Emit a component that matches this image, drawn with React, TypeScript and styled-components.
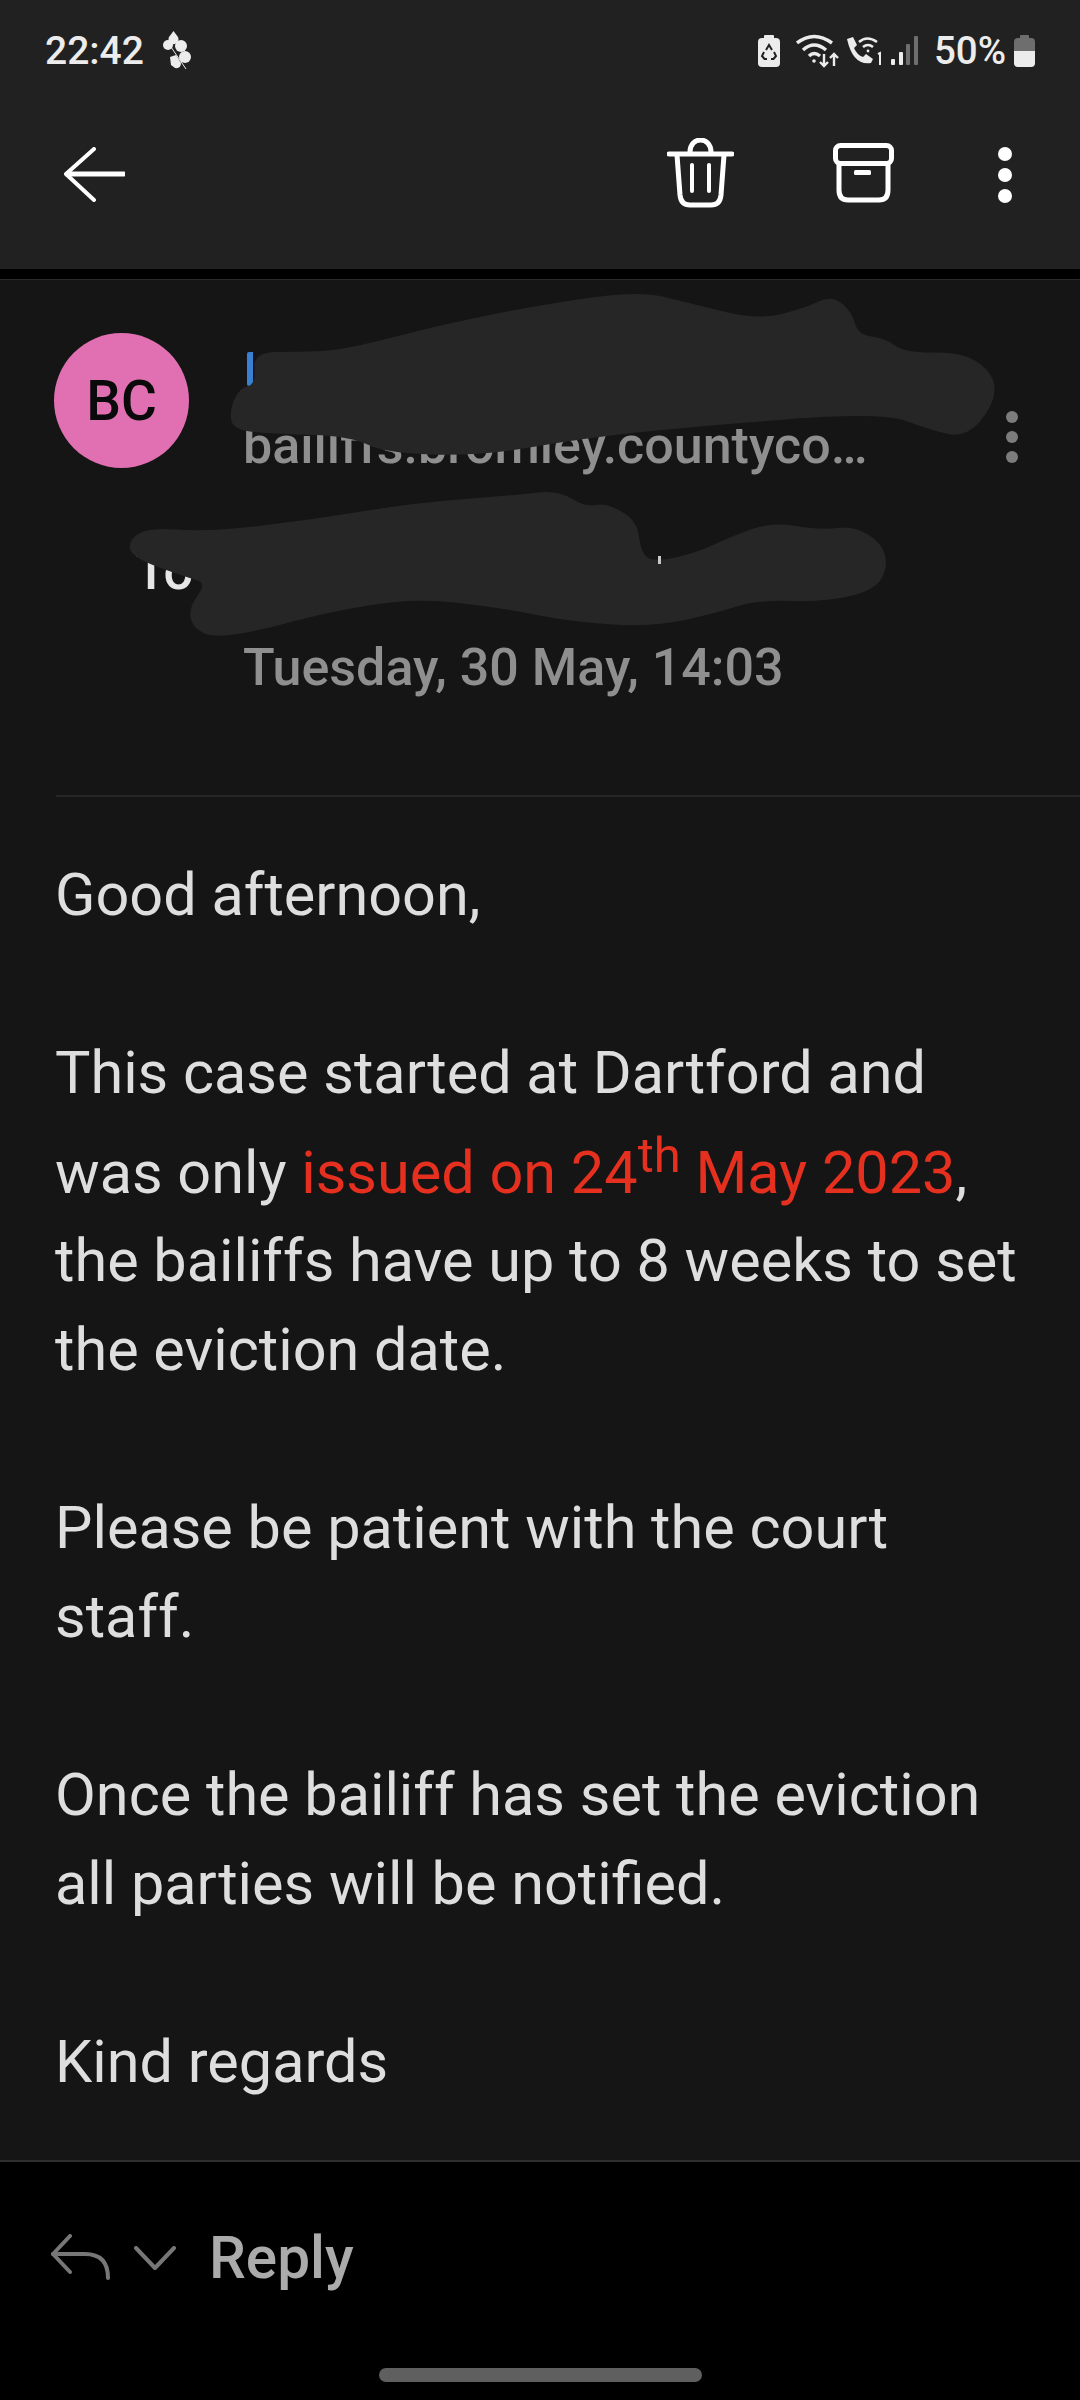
import React from "react";
import styled, { createGlobalStyle } from "styled-components";

const Global = createGlobalStyle`
  html, body { margin: 0; padding: 0; background: #000; }
  * { box-sizing: border-box; }
`;

const Page = styled.div`
  position: relative;
  width: 1080px;
  height: 2400px;
  display: flex;
  flex-direction: column;
  overflow: hidden;
  background: #151515;
  font-family: Roboto, "Noto Sans", sans-serif;
`;

const Header = styled.header`
  height: 269px;
  background: #212121;
  display: flex;
  flex-direction: column;
`;

const StatusBar = styled.div`
  height: 100px;
  padding: 32px 45px 0 45px;
  display: flex;
  align-items: flex-start;
  justify-content: space-between;
  color: #ececec;
`;

const StatusGroup = styled.div`
  display: flex;
  align-items: center;
  height: 38px;
`;

const Clock = styled.span`
  font-size: 39px;
  font-weight: 500;
  line-height: 38px;
  margin-right: 17px;
`;

const Percent = styled.span`
  font-size: 38.5px;
  font-weight: 500;
  line-height: 38px;
  margin: 0 8px 0 16px;
`;

const StatusIcon = styled.svg<{ $left?: number }>`
  display: block;
  flex: none;
  margin-left: ${(p) => p.$left ?? 0}px;
`;

const Toolbar = styled.div`
  flex: 1;
  display: flex;
  align-items: flex-start;
  padding: 38px 0 0 64px;
`;

const ToolIcon = styled.svg<{ $left: number; $top: number }>`
  display: block;
  flex: none;
  margin-left: ${(p) => p.$left}px;
  margin-top: ${(p) => p.$top}px;
`;

const Band = styled.div`
  height: 10px;
  background: #000;
  flex: none;
`;

const Message = styled.main`
  flex: 1;
  border-top: 1px solid #2b2b2b;
  display: flex;
  flex-direction: column;
  min-height: 0;
`;

const MetaBlock = styled.section`
  height: 515px;
  padding: 53px 0 0 54px;
  display: flex;
  flex: none;
`;

const Avatar = styled.div`
  width: 135px;
  height: 135px;
  border-radius: 50%;
  background: #e070b2;
  color: #0a0a0a;
  font-size: 55px;
  font-weight: 500;
  display: flex;
  align-items: center;
  justify-content: center;
  flex: none;
`;

const Details = styled.div`
  margin-left: 54px;
  width: 702px;
  display: flex;
  flex-direction: column;
`;

const NameMark = styled.div`
  width: 6px;
  height: 34px;
  margin: 19px 0 0 4px;
  border-radius: 2px 0 0 2px;
  background: #3a80d2;
`;

const Email = styled.div`
  margin-top: 32px;
  font-size: 52px;
  font-weight: 500;
  line-height: 56px;
  color: #8f8f8f;
  white-space: nowrap;
`;

const ToLine = styled.div`
  margin: 69px 0 0 -108px;
  font-size: 52.8px;
  font-weight: 500;
  line-height: 56px;
  color: #e6e6e6;
  white-space: nowrap;
`;

const DateLine = styled.div`
  margin-top: 41px;
  font-size: 52px;
  font-weight: 500;
  line-height: 56px;
  color: #8f8f8f;
  white-space: nowrap;
`;

const MoreIcon = styled.svg`
  display: block;
  flex: none;
  margin: 78px 0 0 61px;
`;

const Divider = styled.div`
  height: 2px;
  margin-left: 56px;
  background: #262626;
  flex: none;
`;

const Body = styled.article`
  flex: 1;
  padding: 54px 0 0 55px;
  font-size: 59.4px;
  line-height: 89px;
  color: #dedede;
  white-space: nowrap;
  min-height: 0;
`;

const Para = styled.p`
  margin: 0 0 89px 0;
`;

const TextLine = styled.div<{ $tall?: boolean }>`
  height: ${(p) => (p.$tall ? 99 : 89)}px;
  line-height: ${(p) => (p.$tall ? 111 : 89)}px;
`;

const Red = styled.span`
  color: #e6301f;
`;

const Sup = styled.sup`
  font-size: 49px;
  line-height: 0;
  vertical-align: 21px;
`;

const ReplyBar = styled.footer`
  height: 240px;
  flex: none;
  background: #000;
  border-top: 2px solid #2e2e2e;
  display: flex;
  flex-direction: column;
  align-items: flex-start;
`;

const ReplyRow = styled.div`
  display: flex;
  align-items: flex-start;
  padding: 72px 0 0 51px;
  height: 206px;
`;

const ReplyIcon = styled.svg`
  display: block;
  flex: none;
`;

const ChevronIcon = styled.svg`
  display: block;
  flex: none;
  margin: 12px 0 0 24px;
`;

const ReplyLabel = styled.span`
  margin: -12px 0 0 33px;
  font-size: 58.5px;
  font-weight: 500;
  line-height: 72px;
  color: #ababab;
`;

const HomeBar = styled.div`
  width: 323px;
  height: 14px;
  border-radius: 7px;
  background: #5f5f5f;
  align-self: center;
`;

const Redactions = styled.svg`
  position: absolute;
  left: 0;
  top: 0;
  pointer-events: none;
`;

const smooth = (pts: number[][]) => {
  const mid = (a: number[], b: number[]) => [(a[0] + b[0]) / 2, (a[1] + b[1]) / 2];
  const n = pts.length;
  const s = mid(pts[n - 1], pts[0]);
  let d = `M${s[0]} ${s[1]}`;
  pts.forEach((p, i) => {
    const m = mid(p, pts[(i + 1) % n]);
    d += ` Q${p[0]} ${p[1]} ${m[0]} ${m[1]}`;
  });
  return d + "Z";
};

const blobOne = [
  [230, 408], [240, 388], [256, 384], [253, 352], [300, 352], [344, 350], [448, 323], [551, 303],
  [640, 291], [689, 303], [758, 320], [805, 308], [832, 295], [852, 312], [858, 335], [885, 338],
  [905, 353], [964, 352], [995, 375], [994, 405], [966, 438], [930, 430], [882, 412], [689, 427],
  [585, 438], [480, 456], [385, 453], [350, 436], [275, 434], [232, 430],
];

const blobTwo = [
  [126, 545], [145, 527], [207, 532], [310, 520], [413, 503], [517, 495], [558, 490], [585, 507],
  [606, 503], [637, 520], [641, 553], [654, 562], [696, 553], [730, 537], [771, 522], [820, 530],
  [854, 526], [882, 543], [888, 567], [875, 590], [826, 602], [758, 600], [716, 613], [654, 627],
  [572, 622], [496, 607], [413, 598], [324, 613], [262, 630], [213, 638], [192, 627], [189, 607],
  [207, 583], [186, 577], [138, 560],
];

const App = () => (
  <Page>
    <Global />
    <Header>
      <StatusBar>
        <StatusGroup>
          <Clock>22:42</Clock>
          <StatusIcon width="30" height="40" viewBox="0 0 30 40" fill="#ececec">
            <path d="M12.5 0 L17 6 A5 5 0 1 1 8 6 Z" />
            <circle cx="7" cy="14" r="5" />
            <circle cx="20" cy="15" r="6" />
            <circle cx="24" cy="26" r="6" />
            <path d="M9 26 L15 24 L20 32 Q20 38 14 37 L10 34 Z" />
            <path d="M10 16 L25 38" stroke="#ececec" strokeWidth="1" fill="none" />
          </StatusIcon>
        </StatusGroup>
        <StatusGroup>
          <StatusIcon width="22" height="32" viewBox="0 0 22 32" fill="#ececec">
            <rect x="6" y="0" width="10" height="4" rx="1" />
            <rect x="0" y="3" width="22" height="29" rx="4" />
            <path
              d="M8 15 L11 10 L14 15 M16 17 L18 21 L15.5 24 H13 M9 24 H6.5 L4 21 L6 17"
              stroke="#212121"
              strokeWidth="2"
              fill="none"
            />
          </StatusIcon>
          <StatusIcon $left={16} width="44" height="34" viewBox="0 0 44 34" fill="none" stroke="#ececec" strokeWidth="3.4">
            <path d="M1 9 Q18 -4 36 9" />
            <path d="M7 16 Q18 6 30 16" />
            <path d="M13 22 Q18 17 24 22" />
            <circle cx="18" cy="27" r="1.8" fill="#ececec" stroke="none" />
            <path d="M28 20 V32 M24 28 L28 32 L32 28" strokeWidth="2.4" />
            <path d="M38 32 V20 M34 24 L38 20 L42 24" strokeWidth="2.4" />
          </StatusIcon>
          <StatusIcon $left={5} width="38" height="30" viewBox="0 0 38 30" fill="none" stroke="#ececec" strokeWidth="2.6">
            <path
              d="M2 3 L8 1 L12 9 L9 12 Q12 19 18 21 L21 18 L28 23 L26 27 Q8 30 2 3 Z"
              fill="#ececec"
              stroke="none"
            />
            <path d="M14 6 Q22 -1 32 6" />
            <path d="M18 11 Q23 7 28 11" />
            <circle cx="23" cy="15" r="1.4" fill="#ececec" stroke="none" />
            <path d="M33 18 L35 17 V29" strokeWidth="2" />
          </StatusIcon>
          <StatusIcon $left={8} width="27" height="30" viewBox="0 0 27 30">
            <rect x="0" y="23" width="4" height="6" rx="1" fill="#ececec" />
            <rect x="8" y="16" width="4" height="13" rx="1" fill="#ececec" />
            <rect x="15" y="8" width="4" height="21" rx="1" fill="#6e6e6e" />
            <rect x="23" y="0" width="4" height="29" rx="1" fill="#6e6e6e" />
          </StatusIcon>
          <Percent>50%</Percent>
          <StatusIcon width="21" height="32" viewBox="0 0 21 32">
            <rect x="6" y="0" width="9" height="4" rx="1" fill="#6e6e6e" />
            <path d="M4 3 H17 Q21 3 21 7 V16 H0 V7 Q0 3 4 3 Z" fill="#6e6e6e" />
            <path d="M0 16 H21 V28 Q21 32 17 32 H4 Q0 32 0 28 Z" fill="#ececec" />
          </StatusIcon>
        </StatusGroup>
      </StatusBar>
      <Toolbar>
        <ToolIcon $left={0} $top={9} width="61" height="55" viewBox="0 0 61 55" fill="none" stroke="#fff" strokeLinecap="round">
          <path d="M60 27 H3" strokeWidth="5" />
          <path d="M30 2 L2 27 L30 53" strokeWidth="4" strokeLinejoin="round" />
        </ToolIcon>
        <ToolIcon $left={542} $top={0} width="67" height="70" viewBox="0 0 67 70" fill="none" stroke="#fff" strokeWidth="5">
          <path d="M2 16 H65" strokeLinecap="round" />
          <path d="M23 14 C23 -2 44 -2 44 14" />
          <path d="M10 17 L13 57 Q14 67 23 67 H44 Q53 67 54 57 L57 17" />
          <path d="M25 27 V53 M42 27 V53" strokeWidth="4" strokeLinecap="round" />
        </ToolIcon>
        <ToolIcon $left={99} $top={5} width="61" height="60" viewBox="0 0 61 60" fill="none" stroke="#fff" strokeWidth="5">
          <rect x="2.5" y="2.5" width="56" height="18" rx="5" />
          <path d="M6 20 V47 Q6 57 15 57 H46 Q55 57 55 47 V20" />
          <rect x="21" y="27" width="17" height="5" rx="1.5" fill="#fff" stroke="none" />
        </ToolIcon>
        <ToolIcon $left={104} $top={9} width="14" height="56" viewBox="0 0 14 56" fill="#fff">
          <ellipse cx="7" cy="7" rx="7" ry="7" />
          <ellipse cx="7" cy="28" rx="7" ry="7" />
          <ellipse cx="7" cy="49" rx="7" ry="7" />
        </ToolIcon>
      </Toolbar>
    </Header>
    <Band />
    <Message>
      <MetaBlock>
        <Avatar>BC</Avatar>
        <Details>
          <NameMark />
          <Email>bailiffs.bromley.countyco…</Email>
          <ToLine>To</ToLine>
          <DateLine>Tuesday, 30 May, 14:03</DateLine>
        </Details>
        <MoreIcon width="12" height="52" viewBox="0 0 12 52" fill="#7c7c7c">
          <circle cx="6" cy="6" r="6" />
          <circle cx="6" cy="26" r="6" />
          <circle cx="6" cy="46" r="6" />
        </MoreIcon>
      </MetaBlock>
      <Divider />
      <Body>
        <Para>Good afternoon,</Para>
        <Para>
          <TextLine>This case started at Dartford and</TextLine>
          <TextLine $tall>
            was only <Red>issued on 24<Sup>th</Sup> May 2023</Red>,
          </TextLine>
          <TextLine>the bailiffs have up to 8 weeks to set</TextLine>
          <TextLine>the eviction date.</TextLine>
        </Para>
        <Para>
          <TextLine>Please be patient with the court</TextLine>
          <TextLine>staff.</TextLine>
        </Para>
        <Para>
          <TextLine>Once the bailiff has set the eviction</TextLine>
          <TextLine>all parties will be notified.</TextLine>
        </Para>
        <Para>Kind regards</Para>
      </Body>
    </Message>
    <ReplyBar>
      <ReplyRow>
        <ReplyIcon width="59" height="46" viewBox="0 0 59 46" fill="none" stroke="#777" strokeWidth="4" strokeLinecap="round" strokeLinejoin="round">
          <path d="M19 2 L2 20 L19 38" />
          <path d="M2 20 H34 Q57 20 57 44" />
        </ReplyIcon>
        <ChevronIcon width="42" height="24" viewBox="0 0 42 24" fill="none" stroke="#777" strokeWidth="4" strokeLinecap="round" strokeLinejoin="round">
          <path d="M2 2 L21 22 L40 2" />
        </ChevronIcon>
        <ReplyLabel>Reply</ReplyLabel>
      </ReplyRow>
      <HomeBar />
    </ReplyBar>
    <Redactions width="1080" height="700" viewBox="0 0 1080 700" fill="#262626">
      <path d={smooth(blobOne)} />
      <path d={smooth(blobTwo)} />
      <rect x="658" y="556" width="3" height="8" fill="#c8c8c8" />
    </Redactions>
  </Page>
);

export default App;
